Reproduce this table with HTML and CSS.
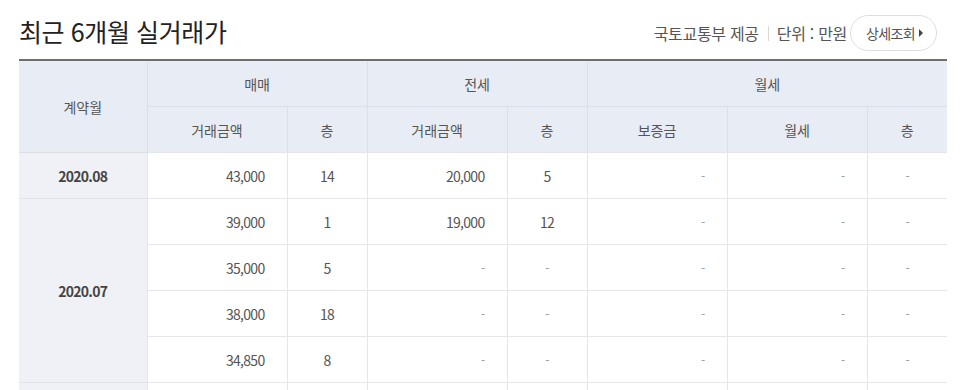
FILE: index.html
```html
<!DOCTYPE html>
<html lang="ko">
<head>
<meta charset="utf-8">
<title>최근 6개월 실거래가</title>
<link rel="stylesheet" href="styles.css">
</head>
<body>
<div class="wrap">
  <div class="head">
    <h2 class="title">최근 6개월 실거래가</h2>
    <div class="meta">
      <span class="src">국토교통부 제공</span>
      <span class="sep"></span>
      <span class="unit">단위 : 만원</span>
      <button class="more" type="button">상세조회<span class="tri"></span></button>
    </div>
  </div>
  <table class="deals">
    <colgroup>
      <col class="c-month"><col class="c-price"><col class="c-floor">
      <col class="c-price"><col class="c-floor">
      <col class="c-price"><col class="c-price"><col class="c-floor">
    </colgroup>
    <thead>
      <tr>
        <th rowspan="2">계약월</th>
        <th colspan="2">매매</th>
        <th colspan="2">전세</th>
        <th colspan="3">월세</th>
      </tr>
      <tr>
        <th>거래금액</th><th>층</th>
        <th>거래금액</th><th>층</th>
        <th>보증금</th><th>월세</th><th>층</th>
      </tr>
    </thead>
    <tbody>
      <tr>
        <td class="month">2020.08</td>
        <td class="num">43,000</td><td class="fl">14</td>
        <td class="num">20,000</td><td class="fl">5</td>
        <td class="num dash">-</td><td class="num dash">-</td><td class="fl dash">-</td>
      </tr>
      <tr>
        <td class="month" rowspan="4">2020.07</td>
        <td class="num">39,000</td><td class="fl">1</td>
        <td class="num">19,000</td><td class="fl">12</td>
        <td class="num dash">-</td><td class="num dash">-</td><td class="fl dash">-</td>
      </tr>
      <tr>
        <td class="num">35,000</td><td class="fl">5</td>
        <td class="num dash">-</td><td class="fl dash">-</td>
        <td class="num dash">-</td><td class="num dash">-</td><td class="fl dash">-</td>
      </tr>
      <tr>
        <td class="num">38,000</td><td class="fl">18</td>
        <td class="num dash">-</td><td class="fl dash">-</td>
        <td class="num dash">-</td><td class="num dash">-</td><td class="fl dash">-</td>
      </tr>
      <tr>
        <td class="num">34,850</td><td class="fl">8</td>
        <td class="num dash">-</td><td class="fl dash">-</td>
        <td class="num dash">-</td><td class="num dash">-</td><td class="fl dash">-</td>
      </tr>
      <tr>
        <td class="month"></td>
        <td class="num"></td><td class="fl"></td>
        <td class="num"></td><td class="fl"></td>
        <td class="num"></td><td class="num"></td><td class="fl"></td>
      </tr>
    </tbody>
  </table>
</div>
</body>
</html>
```

FILE: styles.css
```css
html, body {
  margin: 0;
  padding: 0;
  background: #fff;
}
body {
  font-family: "Noto Sans CJK KR", "Noto Sans", sans-serif;
  color: #555;
}
.wrap {
  padding: 0 19px;
}
.head {
  height: 59px;
  display: flex;
  align-items: center;
  justify-content: space-between;
}
.title {
  margin: 0;
  font-size: 25px;
  font-weight: 400;
  color: #222;
  letter-spacing: -0.4px;
  padding-top: 2px;
}
.meta {
  display: flex;
  align-items: center;
  font-size: 16px;
  color: #555;
  letter-spacing: -0.3px;
  padding-top: 7px;
  margin-right: 10px;
}
.sep {
  width: 1px;
  height: 15px;
  background: #d9d9d9;
  margin: 0 8px 0 9px;
}
.more {
  margin-left: 3px;
  height: 36px;
  width: 87px;
  padding: 0 0 0 2px;
  border: 1px solid #dedede;
  border-radius: 18px;
  background: #fff;
  font-family: inherit;
  font-size: 14px;
  color: #555;
  letter-spacing: -0.6px;
  display: flex;
  align-items: center;
  justify-content: center;
  gap: 4px;
}
.tri {
  width: 0;
  height: 0;
  border-left: 4px solid #444;
  border-top: 4px solid transparent;
  border-bottom: 4px solid transparent;
}
.deals {
  width: 928px;
  border-collapse: collapse;
  table-layout: fixed;
  border-top: 2px solid #6e6e6e;
}
.c-month { width: 128px; }
.c-price { width: 140px; }
.c-floor { width: 80px; }
.deals th {
  height: 45px;
  padding: 0;
  background: #e8ecf5;
  font-weight: 400;
  font-size: 14px;
  color: #555;
  border: 1px solid #dcdfe5;
  border-top: 0;
}
.deals thead tr:last-child th {
  border-bottom: 1px solid #e4e6ea;
}
.deals th:first-child { border-left: 0; }
.deals tr > :last-child { border-right: 0; }
.deals td {
  height: 45px;
  padding: 0;
  font-size: 14px;
  color: #555;
  letter-spacing: -0.7px;
  border: 1px solid #e6e6e6;
}
.deals td:first-child { border-left: 0; }
.deals .month {
  background: #eff1f6;
  text-align: center;
  font-weight: 700;
  color: #444;
  border-bottom-color: #e2e4e9;
}
.deals .num {
  text-align: right;
  padding-right: 22px;
}
.deals .fl {
  text-align: center;
}
.deals .dash {
  color: #999;
  font-size: 12px;
}
```
